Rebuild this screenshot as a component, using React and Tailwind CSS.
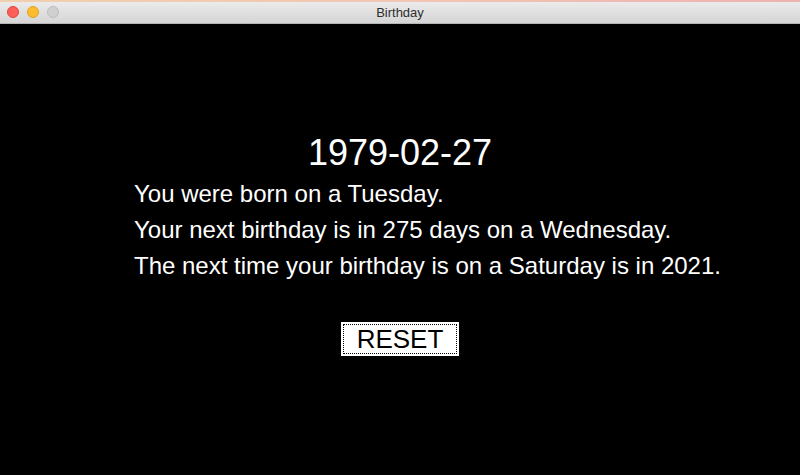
export default function App() {
  return (
    <div className="w-[800px] h-[475px] bg-black flex flex-col overflow-hidden" style={{ fontFamily: '"Liberation Sans", Arial, sans-serif' }}>
      <div className="h-[2px] bg-gradient-to-r from-[#f0cfae] via-[#f2c6b4] to-[#ecb3b0]" />
      <div className="relative h-[22px] bg-gradient-to-b from-[#ebebeb] to-[#d5d5d5] border-b border-[#b5b5b5] flex items-center justify-center">
        <div className="absolute left-[7px] top-[4px] flex gap-[8px]">
          <div className="w-[12px] h-[12px] rounded-full bg-[#fc5f57] border border-[#e0443e]" />
          <div className="w-[12px] h-[12px] rounded-full bg-[#fdbc2e] border border-[#dea123]" />
          <div className="w-[12px] h-[12px] rounded-full bg-[#d0d0d0] border border-[#bcbcbc]" />
        </div>
        <span className="text-[13px] text-[#2e2e2e] leading-none">Birthday</span>
      </div>
      <div className="flex flex-col pt-[109px]">
        <div className="text-center text-white text-[36px] leading-[40px]">1979-02-27</div>
        <div className="pl-[134px] text-white text-[24px] leading-[36px] mt-[3px]">
          <div>You were born on a Tuesday.</div>
          <div>Your next birthday is in 275 days on a Wednesday.</div>
          <div>The next time your birthday is on a Saturday is in 2021.</div>
        </div>
        <div className="flex justify-center mt-[38px]">
          <button className="w-[118px] h-[34px] bg-white p-[2px]">
            <div className="w-full h-full border border-dotted border-black flex items-center justify-center text-black text-[26px] leading-none">RESET</div>
          </button>
        </div>
      </div>
    </div>
  );
}
